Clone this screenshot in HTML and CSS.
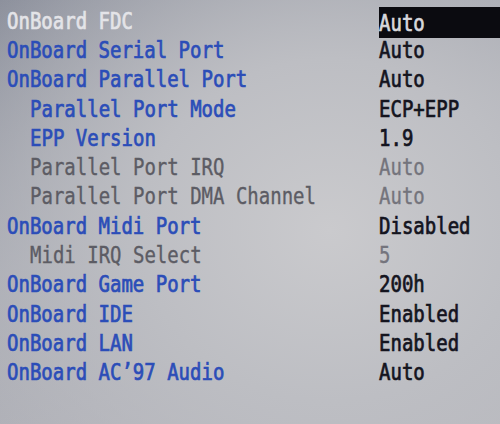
FILE: index.html
```html
<!DOCTYPE html>
<html lang="en">
<head>
  <meta charset="UTF-8" />
  <title>Integrated Peripherals</title>
  <link rel="stylesheet" href="styles.css">
</head>
<body>

  <!-- BIOS setup list -->
  <div class="screen">
    <div class="row">
      <span class="label off"><span class="txt">OnBoard FDC</span></span>
      <span class="value selected"><span class="txt">Auto</span></span>
    </div>
    <div class="row">
      <span class="label"><span class="txt">OnBoard Serial Port</span></span>
      <span class="value"><span class="txt">Auto</span></span>
    </div>
    <div class="row">
      <span class="label"><span class="txt">OnBoard Parallel Port</span></span>
      <span class="value"><span class="txt">Auto</span></span>
    </div>
    <div class="row sub">
      <span class="label"><span class="txt">Parallel Port Mode</span></span>
      <span class="value"><span class="txt">ECP+EPP</span></span>
    </div>
    <div class="row sub">
      <span class="label"><span class="txt">EPP Version</span></span>
      <span class="value"><span class="txt">1.9</span></span>
    </div>
    <div class="row sub dim">
      <span class="label"><span class="txt">Parallel Port IRQ</span></span>
      <span class="value"><span class="txt">Auto</span></span>
    </div>
    <div class="row sub dim">
      <span class="label"><span class="txt">Parallel Port DMA Channel</span></span>
      <span class="value"><span class="txt">Auto</span></span>
    </div>
    <div class="row">
      <span class="label"><span class="txt">OnBoard Midi Port</span></span>
      <span class="value"><span class="txt">Disabled</span></span>
    </div>
    <div class="row sub dim">
      <span class="label"><span class="txt">Midi IRQ Select</span></span>
      <span class="value"><span class="txt">5</span></span>
    </div>
    <div class="row">
      <span class="label"><span class="txt">OnBoard Game Port</span></span>
      <span class="value"><span class="txt">200h</span></span>
    </div>
    <div class="row">
      <span class="label"><span class="txt">OnBoard IDE</span></span>
      <span class="value"><span class="txt">Enabled</span></span>
    </div>
    <div class="row">
      <span class="label"><span class="txt">OnBoard LAN</span></span>
      <span class="value"><span class="txt">Enabled</span></span>
    </div>
    <div class="row">
      <span class="label"><span class="txt">OnBoard AC’97 Audio</span></span>
      <span class="value"><span class="txt">Auto</span></span>
    </div>
  </div>

</body>
</html>
```

FILE: styles.css
```css
:root {
  --blue: #2b4db8;
  --ink: #14141e;
  --dim: #5c5c64;
  --dim-value: #74747c;
}

* {
  margin: 0;
  padding: 0;
  box-sizing: border-box;
}

body {
  width: 500px;
  height: 424px;
  overflow: hidden;
  font-family: 'DejaVu Sans Mono', 'Liberation Mono', monospace;
  font-size: 19px;
  -webkit-text-stroke: 0.6px currentColor;
  background:
    radial-gradient(ellipse 420px 380px at 330px 230px, #cacacd 0%, #bdbec3 45%, rgba(160, 163, 172, 0) 100%),
    linear-gradient(160deg, #8c909c 0%, #a8aab2 45%, #b6b6bc 100%);
}

/* Rows */
.screen {
  padding-top: 5px;
}

.row {
  display: flex;
  height: 29.3px;
  align-items: center;
}

.label {
  width: 379px;
  padding-left: 7px;
  color: var(--blue);
}

.sub .label {
  padding-left: 30px;
}

.label.off {
  color: #e4e4e8;
}

.dim .label {
  color: var(--dim);
  -webkit-text-stroke: 0.3px currentColor;
}

.value {
  flex: 1;
  color: var(--ink);
  height: 29px;
  display: flex;
  align-items: center;
}

.dim .value {
  color: var(--dim-value);
  -webkit-text-stroke: 0.3px currentColor;
}

.value.selected {
  background: #0b0b10;
  color: #d8d8dc;
  margin-top: 5px;
  height: 31px;
}

/* tall narrow BIOS glyphs */
.txt {
  display: inline-block;
  transform: scaleY(1.22);
  white-space: pre;
}
```
